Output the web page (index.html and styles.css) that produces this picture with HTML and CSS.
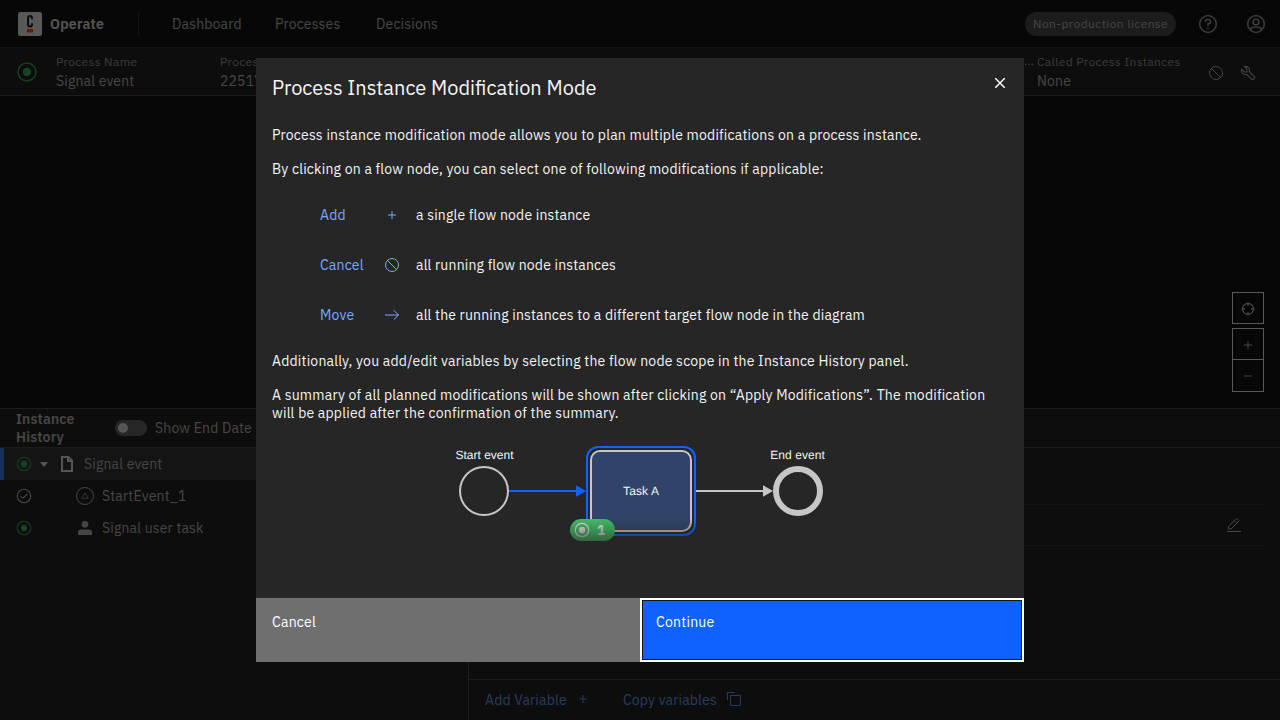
FILE: index.html
```html
<!DOCTYPE html>
<html lang="en">
<head>
<meta charset="utf-8">
<title>Operate: Process Instance</title>
<link rel="stylesheet" href="styles.css">
</head>
<body>
<svg class="defs" width="0" height="0">
  <symbol id="active" viewBox="0 0 20 20"><circle cx="10" cy="10" r="9" fill="none" stroke="currentColor" stroke-width="1.4"/><circle cx="10" cy="10" r="4.2" fill="currentColor"/></symbol>
  <symbol id="error" viewBox="0 0 16 16"><path d="M3.2 3.2 12.8 12.8" stroke="currentColor"/><circle cx="8" cy="8" r="6.5" fill="none" stroke="currentColor"/></symbol>
  <symbol id="add" viewBox="0 0 16 16"><path d="M8 4v8M4 8h8" stroke="currentColor"/></symbol>
</svg>
<div class="app">
  <header class="header">
    <svg class="logo" viewBox="0 0 24 24"><rect width="24" height="24" rx="2.5" fill="#fff"/><path d="M14 7.2V6.2Q14 4 12 4T10 6.2V12.300Q10 14.500 12 14.500T14 12.300V11.300" fill="none" stroke="#262626" stroke-width="2"/><rect x="9" y="17" width="6" height="3.500" fill="#fc5d0d"/></svg>
    <b class="brand">Operate</b>
    <nav class="nav"><a class="n1">Dashboard</a><a class="n2">Processes</a><a>Decisions</a></nav>
    <span class="license">Non-production license</span>
    <svg class="hicon help" viewBox="0 0 20 20" fill="none" stroke="currentColor" stroke-width="1.3"><circle cx="10" cy="10" r="8.300"/><path d="M7.400 8V7.700Q7.400 5.700 9.400 5.700H10.500Q12.600 5.700 12.600 7.700T10.500 9.700H10V11.800"/><circle cx="10" cy="14.200" r=".5" fill="currentColor" stroke-width=".6"/></svg>
    <svg class="hicon" viewBox="0 0 20 20" fill="none" stroke="currentColor" stroke-width="1.300"><circle cx="10" cy="10" r="8.300"/><circle cx="10" cy="8" r="2.900"/><path d="M5 16.500V15.300Q5 13.200 7.100 13.200H12.900Q15 13.200 15 15.300V16.500"/></svg>
  </header>
  <section class="instance">
    <svg class="state green"><use href="#active"/></svg>
    <div class="field name"><span>Process Name</span><p>Signal event</p></div>
    <div class="field key"><span>Process</span><p>22517</p></div>
    <span class="dots">...</span>
    <div class="field called"><span>Called Process Instances</span><p>None</p></div>
    <svg class="i16 op-icon cancel-op"><use href="#error"/></svg>
    <svg class="i16 op-icon" viewBox="0 0 16 16" fill="none" stroke="currentColor" stroke-width="1.050" stroke-linejoin="round"><path d="M4.300 1.500 7 4.200V6.900H4.300L1.600 4.200Q1 7 2.900 8.700 4.500 9.900 6.700 9.300L11.600 14.100Q12.700 15 13.900 13.900 15 12.700 14.100 11.600L9.300 6.700Q9.900 4.500 8.600 2.800 7.100 1 4.300 1.500Z"/></svg>
  </section>
  <section class="canvas">
    <div class="controls">
      <div class="ctl"><svg class="i16" viewBox="0 0 16 16" fill="none" stroke="currentColor" stroke-width="1.300"><circle cx="8" cy="8" r="5.500"/><path d="M8 1.500V5M8 11v3.500M1.500 8H5M11 8h3.500"/></svg></div>
      <div class="ctl zoomin"><svg class="i16"><use href="#add"/></svg></div>
      <div class="ctl zoomout"><svg class="i16" viewBox="0 0 16 16"><path d="M4 8h8" stroke="currentColor"/></svg></div>
    </div>
  </section>
  <main class="bottom">
    <section class="history">
      <div class="phead"><b>Instance<br>History</b><i class="toggle"></i><span>Show End Date</span></div>
      <div class="row selected"><svg class="rstate green"><use href="#active"/></svg><i class="caret"></i><svg class="doc" viewBox="0 0 14 18" fill="none" stroke="currentColor" stroke-width="2"><path d="M2 2H8.500L12 5.500V16H2ZM8 2V6H12"/></svg><span>Signal event</span></div>
      <div class="row"><svg class="rstate" viewBox="0 0 16 16" fill="none" stroke="currentColor" stroke-width="1.100"><circle cx="8" cy="8" r="6.700"/><path d="M4.800 8.200 7 10.300 11.300 6"/></svg><svg class="nodeicon" viewBox="0 0 18 18" fill="none" stroke="currentColor"><circle cx="9" cy="9" r="8.500"/><path d="M9 5.700 12.300 11.300H5.700Z" stroke-width=".7"/></svg><span>StartEvent_1</span></div>
      <div class="row"><svg class="rstate green"><use href="#active"/></svg><svg class="nodeicon" viewBox="0 0 18 18" fill="currentColor"><circle cx="9" cy="5.300" r="3.400"/><path d="M2 16V13.800Q2 10.500 5.300 10.500H12.700Q16 10.500 16 13.800V16Z"/></svg><span>Signal user task</span></div>
    </section>
    <section class="variables">
      <div class="vhead"></div>
      <div class="vbody"><div class="vlabels"></div><div class="vrow"><svg class="i16" viewBox="0 0 16 16" fill="none" stroke="currentColor"><path d="M1 14.500H15M2.500 9.500 9.900 2.100Q10.500 1.500 11.100 2.100L12.400 3.400Q13 4 12.400 4.600L5 12H2.500ZM8.300 3.700 10.800 6.200"/></svg></div></div>
      <div class="vfoot"><span class="addv">Add Variable</span><svg class="i16"><use href="#add"/></svg><span class="copyv">Copy variables</span><svg class="i16" viewBox="0 0 16 16" fill="none" stroke="currentColor"><path d="M4.500 4.500H14.500V14.500H4.500ZM1.500 9V1.500H9"/></svg></div>
    </section>
  </main>
</div>
<div class="overlay">
  <div class="modal">
    <div class="mhead"><h1>Process Instance Modification Mode</h1><svg class="close" viewBox="0 0 20 20"><path d="M5.300 5.300 14.700 14.700M14.700 5.300 5.300 14.700" stroke="#fff" stroke-width="1.500"/></svg></div>
    <div class="mbody">
      <p>Process instance modification mode allows you to plan multiple modifications on a process instance.</p>
      <p>By clicking on a flow node, you can select one of following modifications if applicable:</p>
      <ul class="ops">
        <li><span class="op">Add</span><svg class="i16"><use href="#add"/></svg><span>a single flow node instance</span></li>
        <li><span class="op">Cancel</span><svg class="i16"><use href="#error"/></svg><span>all running flow node instances</span></li>
        <li><span class="op">Move</span><svg class="i16" viewBox="0 0 16 16" fill="none" stroke="currentColor"><path d="M1 8H14.500M9.800 3.300 14.500 8 9.800 12.700"/></svg><span>all the running instances to a different target flow node in the diagram</span></li>
      </ul>
      <p>Additionally, you add/edit variables by selecting the flow node scope in the Instance History panel.</p>
      <p>A summary of all planned modifications will be shown after clicking on “Apply Modifications”. The modification<br>will be applied after the confirmation of the summary.</p>
      <svg class="flow" width="384" height="110" viewBox="448 438 384 110">
        <g class="flowtext"><text x="484.500" y="459" textLength="58">Start event</text><text x="797.500" y="459" textLength="54.500">End event</text></g>
        <circle cx="484" cy="491" r="24" fill="none" stroke="#c6c6c6" stroke-width="2"/>
        <path d="M509 491H577" stroke="#0f62fe" stroke-width="2"/><path d="M576 485.200 586 491 576 496.800Z" fill="#0f62fe"/>
        <rect x="587" y="447" width="108" height="88" rx="11" fill="none" stroke="#0f62fe" stroke-width="2"/>
        <rect x="591" y="451" width="100" height="80" rx="9" fill="#2f4468" stroke="#c6c6c6" stroke-width="2"/>
        <g class="flowtext"><text x="641" y="495" textLength="36">Task A</text></g>
        <path d="M696 491H764" stroke="#c6c6c6" stroke-width="2"/><path d="M763 485.200 773 491 763 496.800Z" fill="#c6c6c6"/>
        <circle cx="798" cy="491" r="22" fill="none" stroke="#c6c6c6" stroke-width="6"/>
        <rect x="570" y="519" width="45" height="22" rx="11" fill="#42be65"/>
        <circle cx="582" cy="530" r="6.700" fill="none" stroke="#e0e0e0" stroke-width="1.300"/><circle cx="582" cy="530" r="3.200" fill="#e0e0e0"/>
        <text class="count" x="601" y="535">1</text>
      </svg>
    </div>
    <div class="mfoot"><button>Cancel</button><button class="primary">Continue</button></div>
  </div>
</div>
</body>
</html>
```
FILE: styles.css
```css
* { box-sizing: border-box; }
body { margin: 0; background: #161616; color: #c6c6c6; font: 14px/18px "IBM Plex Sans", Roboto, sans-serif; letter-spacing: .16px; overflow: hidden; }
p, h1, ul { margin: 0; padding: 0; font-weight: 400; }
span, b, a { white-space: nowrap; }
.defs { position: absolute; }
.i16 { width: 16px; height: 16px; flex: none; }
.green { color: #42be65; }
.app { width: 1280px; height: 720px; display: flex; flex-direction: column; }
.header { height: 48px; flex: none; display: flex; align-items: center; border-bottom: 1px solid #393939; padding: 0 14px 0 18px; }
.logo { width: 24px; height: 24px; margin-right: 8px; }
.brand { color: #f4f4f4; width: 88px; font-weight: 600; letter-spacing: .25px; }
.nav { display: flex; align-items: center; height: 24px; border-left: 1px solid #393939; padding-left: 33px; flex: 1; }
.nav a { padding-top: 1px; }
.n1 { width: 103px; }
.n2 { width: 101px; }
.license { background: #525252; border-radius: 12px; width: 151px; height: 24px; line-height: 24px; padding-left: 8px; font-size: 12px; letter-spacing: .4px; }
.hicon { width: 20px; height: 20px; }
.help { margin: 0 28px 0 22px; }
.instance { height: 48px; flex: none; background: #262626; border-bottom: 1px solid #525252; display: flex; align-items: center; padding: 0 24px 0 17px; }
.state { width: 20px; height: 20px; margin-right: 19px; }
.field { height: 38px; }
.field span { display: block; font-size: 12px; line-height: 18px; color: #a8a8a8; letter-spacing: .36px; }
.field p { line-height: 20px; }
.name { width: 164px; }
.key { width: 804px; }
.dots { font-size: 12px; width: 13px; height: 37px; line-height: 16px; }
.called { width: 171px; }
.op-icon { position: relative; top: 1px; }
.cancel-op { margin-right: 16px; }
.canvas { height: 312px; flex: none; display: flex; justify-content: flex-end; padding: 196px 16px 0 0; }
.ctl { width: 32px; height: 32px; border: 1px solid #fff; display: grid; place-items: center; padding-top: 1px; }
.zoomin { margin-top: 4px; }
.zoomout { margin-top: -1px; height: 33px; }
.bottom { flex: 1; display: flex; background: #262626; border-top: 1px solid #525252; }
.history { width: 469px; border-right: 1px solid #525252; }
.phead { height: 39px; border-bottom: 1px solid #525252; display: flex; align-items: center; padding-left: 16px; }
.phead b { width: 99px; font-weight: 600; }
.toggle { width: 32px; height: 16px; border-radius: 8px; background: #6f6f6f; margin-right: 8px; padding: 3px; }
.toggle::before { content: ""; display: block; width: 10px; height: 10px; border-radius: 5px; background: #f4f4f4; }
.row { height: 32px; display: flex; align-items: center; padding-left: 16px; }
.selected { background: #393939; border-left: 4px solid #4589ff; padding-left: 12px; }
.rstate { width: 16px; height: 16px; }
.rstate.green { padding: .5px; }
.caret { border: 4.500px solid transparent; border-top: 5px solid #f4f4f4; border-bottom: 0; margin: 0 12px 0 8px; }
.doc { width: 14px; height: 18px; margin-right: 10px; color: #f4f4f4; }
.nodeicon { width: 18px; height: 18px; margin: 0 8px 0 44px; }
.variables { flex: 1; display: flex; flex-direction: column; }
.vhead { height: 39px; border-bottom: 1px solid #525252; }
.vbody { flex: 1; padding: 0 16px; }
.vlabels { height: 57px; border-bottom: 1px solid #393939; }
.vrow { height: 41px; border-bottom: 1px solid #393939; display: flex; justify-content: flex-end; align-items: center; padding-right: 22px; }
.vfoot { height: 41px; border-top: 1px solid #525252; display: flex; align-items: center; padding-left: 16px; color: #78a9ff; }
.vfoot svg { margin-bottom: 2px; }
.addv { width: 90px; }
.copyv { margin-left: 32px; width: 103px; }
.overlay { position: fixed; inset: 0; background: rgba(0, 0, 0, .65); display: grid; place-items: center; }
.modal { width: 768px; height: 604px; background: #262626; color: #f4f4f4; display: flex; flex-direction: column; }
.mhead { height: 68px; flex: none; display: flex; justify-content: space-between; padding: 15px 14px 0 16px; }
h1 { font-size: 20px; line-height: 30px; letter-spacing: 0; }
.close { width: 20px; height: 20px; }
.mbody { position: relative; flex: 1; padding: 0 16px; overflow: hidden; }
.mbody p { margin-bottom: 16px; letter-spacing: .205px; }
.mbody::after { content: ""; position: absolute; left: 0; right: 0; bottom: 0; height: 80px; background: linear-gradient(rgba(38, 38, 38, 0), #262626 40px); }
.ops { list-style: none; padding: 3px 0 0 48px; margin-bottom: 19px; display: grid; row-gap: 14px; letter-spacing: .18px; }
.ops li { height: 36px; display: grid; grid-template-columns: 64px 32px auto; align-items: center; }
.op, .ops svg { color: #78a9ff; }
.flow { display: block; margin: 0 auto; }
.flowtext { font: 12px "Liberation Sans", Arial, sans-serif; letter-spacing: 0; fill: #f4f4f4; text-anchor: middle; text-rendering: geometricPrecision; }
.count { font: 700 14px "IBM Plex Sans", "DejaVu Sans", sans-serif; fill: #e0e0e0; text-anchor: middle; letter-spacing: 0; }
.mfoot { height: 64px; display: flex; }
button { flex: 1; border: 0; background: #6f6f6f; color: #fff; text-align: left; font: inherit; letter-spacing: .25px; padding: 0 16px 16px; }
.primary { background: #0f62fe; border: 2px solid #fff; box-shadow: inset 0 0 0 1px #161616; padding: 0 14px 16px; }
```
